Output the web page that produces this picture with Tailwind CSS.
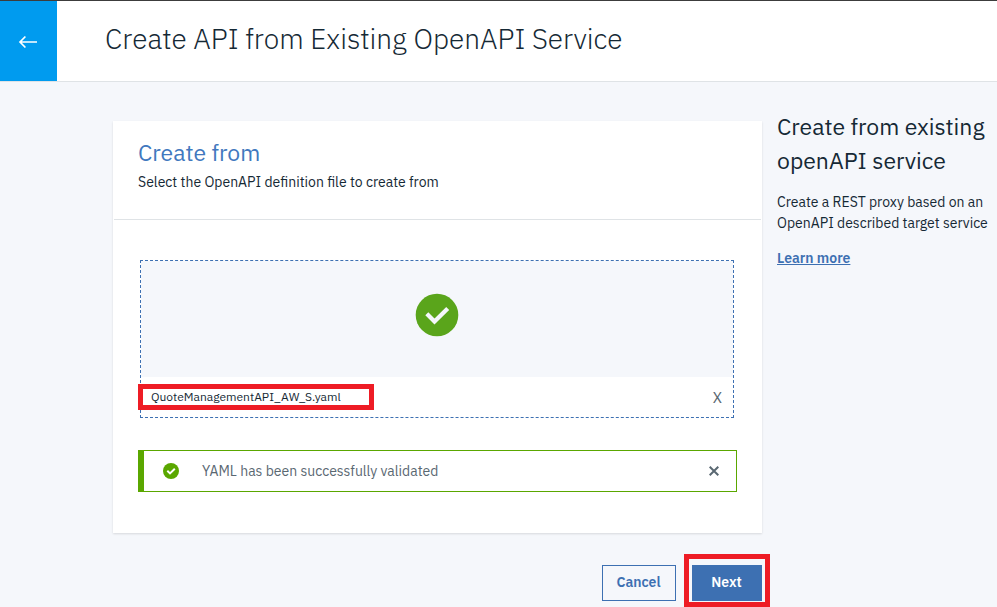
<!DOCTYPE html>
<html lang="en">
<head>
<meta charset="utf-8">
<title>Create API from Existing OpenAPI Service</title>
<script src="https://cdn.jsdelivr.net/npm/@tailwindcss/browser@4"></script>
</head>
<body class="h-[607px] w-[997px] overflow-hidden bg-[#f5f7fb] font-['IBM_Plex_Sans',Roboto,sans-serif] text-[#152935]">
<header class="flex h-[82px] border-t border-b border-t-[#3c3c3c] border-b-[#dfe3e6] bg-white">
  <button class="flex w-[57px] items-center justify-center bg-[#009bef] pt-[2px] pr-[2px]" aria-label="Back">
    <svg class="h-[14px] w-[20px] text-white" viewBox="0 0 20 14" fill="none" stroke="currentColor" stroke-width="1.7"><path d="M19 7H2M7.4 1.5L2 7l5.4 5.5"/></svg>
  </button>
  <h1 class="ml-[48px] pt-[18px] text-[28px] leading-[40px] font-light whitespace-nowrap">Create API from Existing OpenAPI Service</h1>
</header>
<div class="flex">
  <main class="ml-[113px] w-[649px] pt-[39px]">
    <section class="h-[412px] bg-white shadow-[0_1px_2px_rgba(0,0,0,0.12)]">
      <div class="mx-px h-[99px] border-b border-[#dfe3e6] px-6 pt-[16px]">
        <h2 class="text-[23px] leading-[30px] text-[#4178be]">Create from</h2>
        <p class="mt-[5px] text-[14px] leading-[20px] whitespace-nowrap">Select the OpenAPI definition file to create from</p>
      </div>
      <div class="relative mt-[40px] ml-[27px] h-[158px] w-[594px] border border-dashed border-[#3d70b2]">
        <div class="flex h-[116px] items-center justify-center bg-[#f5f7fb] pb-[8px]">
          <svg class="h-[44px] w-[44px]" viewBox="0 0 44 44"><circle cx="22" cy="22" r="21.3" fill="#5aa51b"/><path d="M11.8 20.8l7.7 7.8 13.2-13.2" fill="none" stroke="#f5f7fb" stroke-width="4.2"/></svg>
        </div>
        <div class="flex h-10 items-center justify-between pr-[11px] pl-[10px]">
          <span class="text-[12px]">QuoteManagementAPI_AW_S.yaml</span>
          <button class="pt-[2px] text-[15px] text-[#5a6872]">X</button>
        </div>
        <div class="absolute top-[123px] -left-[3px] h-[26px] w-[236px] border-5 border-[#ee1c25]"></div>
      </div>
      <div class="mt-[32px] ml-[25px] flex h-[42px] w-[599px] items-center border border-l-6 border-[#5aa700] pl-[19px]">
        <svg class="h-4 w-4" viewBox="0 0 16 16"><circle cx="8" cy="8" r="8" fill="#5aa700"/><path d="M4.3 7.8l2.7 2.6 4.8-4.7" fill="none" stroke="#fff" stroke-width="2"/></svg>
        <span class="ml-[23px] text-[14px] text-[#5a6872]">YAML has been successfully validated</span>
        <svg class="mr-[17px] ml-auto h-[10px] w-[10px]" viewBox="0 0 10 10" stroke="#5a6872" stroke-width="2"><path d="M.7.7l8.6 8.6M9.3.7L.7 9.3"/></svg>
      </div>
    </section>
    <div class="mt-[32px] flex justify-end gap-4 text-[14px] font-semibold">
      <button class="h-9 w-[74px] border border-[#3d70b2] pr-px pb-[2px] text-[#3d70b2]">Cancel</button>
      <div class="relative">
        <button class="h-9 w-[70px] bg-[#3d70b2] pr-px pb-[2px] text-white">Next</button>
        <div class="absolute -top-[11px] -left-[8px] h-[53px] w-[86px] border-5 border-[#ee1c25]"></div>
      </div>
    </div>
  </main>
  <aside class="ml-[15px] w-[220px] pt-[27px] whitespace-nowrap">
    <h2 class="text-[23px] leading-[34px]">Create from existing<br>openAPI service</h2>
    <p class="mt-[15px] text-[14px] leading-[21px]">Create a REST proxy based on an<br>OpenAPI described target service</p>
    <a class="mt-[14px] inline-block text-[14px] leading-[21px] font-semibold text-[#3d70b2] underline" href="#">Learn more</a>
  </aside>
</div>
</body>
</html>
